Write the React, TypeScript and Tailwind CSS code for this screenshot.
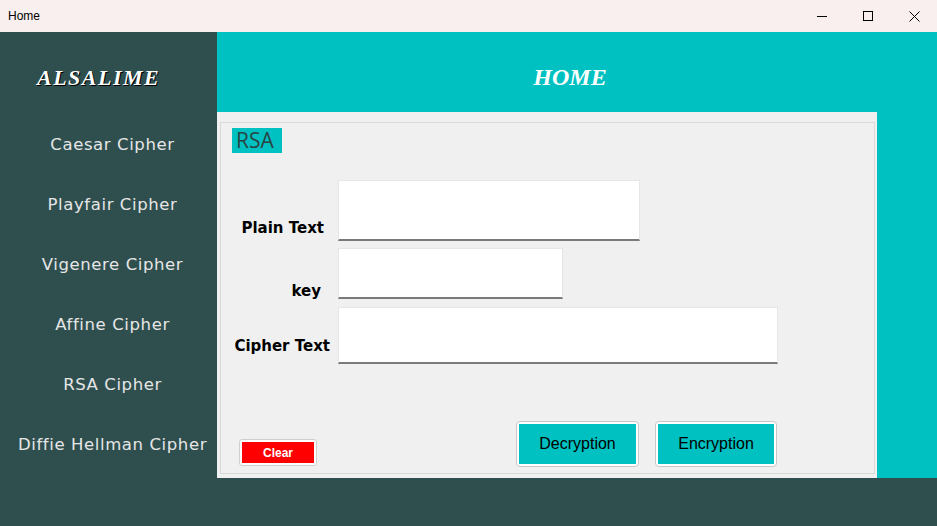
export default function App() {
  const menu = [
    "Caesar Cipher",
    "Playfair Cipher",
    "Vigenere Cipher",
    "Affine Cipher",
    "RSA Cipher",
    "Diffie Hellman Cipher",
  ];

  return (
    <div className="w-[937px] h-[526px] overflow-hidden bg-[#2f4f4f] flex flex-col">
      {/* title bar */}
      <div className="h-[32px] bg-[#f9efee] flex items-center justify-between shrink-0">
        <span className="pl-[8px] text-[12px] text-black font-['Liberation_Sans',sans-serif]">Home</span>
        <div className="flex h-full">
          <div className="w-[46px] h-full flex items-center justify-center">
            <div className="w-[10px] h-px bg-black" />
          </div>
          <div className="w-[46px] h-full flex items-center justify-center">
            <div className="w-[10px] h-[10px] border border-black" />
          </div>
          <div className="w-[46px] h-full flex items-center justify-center">
            <svg width="11" height="11" viewBox="0 0 11 11">
              <path d="M0.5 0.5 L10.5 10.5 M10.5 0.5 L0.5 10.5" stroke="black" strokeWidth="1" />
            </svg>
          </div>
        </div>
      </div>

      <div className="flex h-[446px] shrink-0">
        {/* sidebar */}
        <div className="w-[217px] flex flex-col">
          <div className="h-[82px] flex items-center pl-[37px] pt-[8px]">
            <span
              className="text-white italic font-bold text-[22px] tracking-[1.5px] font-['Liberation_Serif',serif]"
              style={{ textShadow: "1px 1px 0 #000" }}
            >
              ALSALIME
            </span>
          </div>
          <div className="flex flex-col">
            {menu.map((m) => (
              <div
                key={m}
                className="h-[60px] flex items-center justify-center pl-[8px] pt-[2px] text-[#e6e6e6] text-[16.5px] tracking-[0.6px] font-['DejaVu_Sans',sans-serif]"
              >
                {m}
              </div>
            ))}
          </div>
        </div>

        {/* main */}
        <div className="flex-1 bg-[#00c1c1] flex flex-col">
          <div className="h-[80px] flex items-center justify-center pr-[14px] pt-[9px]">
            <span className="text-white italic font-bold text-[24px] font-['Liberation_Serif',serif]">HOME</span>
          </div>
          <div className="w-[660px] flex-1 bg-[#f0f0f0] pl-[3px] pr-[2px] pt-[10px] pb-[4px]">
            <div className="h-full border border-[#d9d9d9] flex flex-col">
              <div className="pl-[11px] pt-[5px]">
                <span className="inline-block bg-[#00c1c1] text-[#2a4444] text-[21px] leading-[25px] px-[4px] w-[50px] font-['Open_Sans',sans-serif]">
                  RSA
                </span>
              </div>

              <div className="flex mt-[26px]">
                <div className="w-[117px] flex items-start justify-end pr-[14px] pt-[40px]">
                  <span className="font-bold text-[15px] leading-[16px] text-black font-['DejaVu_Sans',sans-serif]">Plain Text</span>
                </div>
                <div className="w-[302px] h-[61px] bg-white border border-[#e6e6e6] border-b-2 border-b-[#7a7a7a]" />
              </div>

              <div className="flex mt-[7px]">
                <div className="w-[117px] flex items-start justify-end pr-[17px] pt-[35px]">
                  <span className="font-bold text-[15px] leading-[16px] text-black font-['DejaVu_Sans',sans-serif]">key</span>
                </div>
                <div className="w-[225px] h-[51px] bg-white border border-[#e6e6e6] border-b-2 border-b-[#7a7a7a]" />
              </div>

              <div className="flex mt-[8px]">
                <div className="w-[117px] flex items-start justify-end pr-[8px] pt-[31px]">
                  <span className="font-bold text-[15px] leading-[16px] text-black font-['DejaVu_Sans',sans-serif]">Cipher Text</span>
                </div>
                <div className="w-[440px] h-[57px] bg-white border border-[#e6e6e6] border-b-2 border-b-[#7a7a7a]" />
              </div>

              <div className="flex items-end mt-[57px]">
                <button className="ml-[18px] mb-[2px] w-[78px] h-[27px] rounded-[3px] border border-[#cfcfcf] bg-white p-[2px]">
                  <span className="flex h-full items-center justify-center bg-[#ff0000] text-white font-bold text-[12px] font-['Liberation_Sans',sans-serif]">
                    Clear
                  </span>
                </button>
                <button className="ml-[199px] mb-[1px] w-[123px] h-[46px] rounded-[4px] border border-[#c8c8c8] bg-white p-[2px]">
                  <span className="flex h-full items-center justify-center bg-[#00c1c1] text-black text-[16px] font-['Liberation_Sans',sans-serif]">
                    Decryption
                  </span>
                </button>
                <button className="ml-[16px] mb-[1px] w-[122px] h-[46px] rounded-[4px] border border-[#c8c8c8] bg-white p-[2px]">
                  <span className="flex h-full items-center justify-center bg-[#00c1c1] text-black text-[16px] font-['Liberation_Sans',sans-serif]">
                    Encryption
                  </span>
                </button>
              </div>
            </div>
          </div>
        </div>
      </div>
      <div className="flex-1" />
    </div>
  );
}
